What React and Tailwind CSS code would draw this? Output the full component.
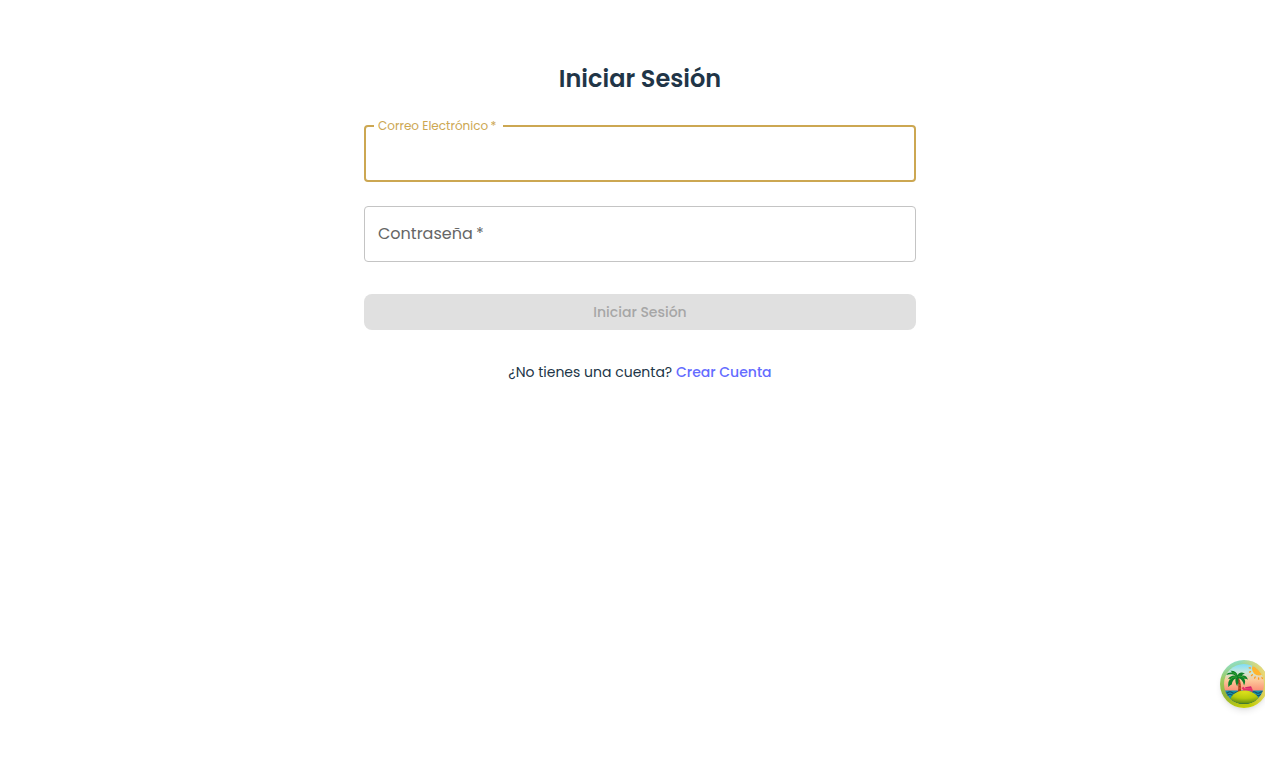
function IslandIcon() {
  return (
    <svg viewBox="0 0 48 48" className="size-12" aria-hidden="true">
      <defs>
        <linearGradient id="ring" x1="0.35" y1="0" x2="0.65" y2="1">
          <stop offset="0" stopColor="#8fe0cf" />
          <stop offset="0.28" stopColor="#9ccb62" />
          <stop offset="0.62" stopColor="#93b536" />
          <stop offset="1" stopColor="#c9d000" />
        </linearGradient>
        <linearGradient id="ringGlow" x1="0" y1="0.5" x2="1" y2="0.25">
          <stop offset="0.5" stopColor="#ffe08a" stopOpacity="0" />
          <stop offset="1" stopColor="#ffdc80" stopOpacity="0.95" />
        </linearGradient>
        <linearGradient id="sky" x1="0" y1="0" x2="0" y2="1">
          <stop offset="0.08" stopColor="#7fdcf8" />
          <stop offset="0.25" stopColor="#c5e9dc" />
          <stop offset="0.42" stopColor="#fdc99a" />
          <stop offset="0.66" stopColor="#fb8a74" />
        </linearGradient>
        <radialGradient id="sand" cx="0.5" cy="0.1" r="0.9">
          <stop offset="0" stopColor="#dde01b" />
          <stop offset="0.55" stopColor="#b8cb0c" />
          <stop offset="1" stopColor="#5c8a12" />
        </radialGradient>
        <clipPath id="scene">
          <circle cx="24" cy="24" r="20" />
        </clipPath>
      </defs>
      <circle cx="24" cy="24" r="24" fill="url(#ring)" />
      <circle cx="24" cy="24" r="24" fill="url(#ringGlow)" />
      <g clipPath="url(#scene)">
        <rect width="48" height="48" fill="url(#sky)" />
        <circle cx="39" cy="8.5" r="7" fill="#ffb52e" />
        <g stroke="#ff9a1c" strokeWidth="1.3" strokeLinecap="round">
          <path d="M30.4 8l-1.2-.1M30.6 11.6l-1.1.5M32.4 14.8l-.9.8M35.2 17l-.6 1.1M38.6 18v1.2M42 17.4l.4 1.1" />
        </g>
        <rect y="30.5" width="48" height="18" fill="#1593ac" />
        <path
          d="M0 32.5q2-1.5 4 0t4 0 4 0 4 0 4 0 4 0 4 0 4 0 4 0 4 0 4 0 4 0M0 35q2-1.5 4 0t4 0 4 0 4 0 4 0 4 0 4 0 4 0 4 0 4 0 4 0 4 0"
          fill="none"
          stroke="#17506b"
          strokeWidth="1.1"
        />
        <path d="M17.6 33c1.4-6 1-11-1.2-15.6l2-.7c2.7 5.3 3 10.4 2.3 16.7z" fill="#a8401f" />
        <path d="M18.5 22l2 .2M19 25l2 .2M18.8 28l2.2.2" stroke="#e56c37" strokeWidth="0.7" />
        <path d="M21.5 28l2.2-1.2 1 1.6 7.6.3.4 1.6-.4 2h-1.1v-1.6l-6-.2-1.4 2h-1.3l.9-2.6z" fill="#e92d68" />
        <path d="M25 27.2l6-.9 1.2 2.4-6.8-.2z" fill="#d4256a" />
        <g transform="translate(-4.4 -3.6) scale(1.2)">
          <path
            d="M18 17c-2-1.8-5.2-1.4-8 2 1.1-.4 1.8-.3 2.2-.1-1.5 1.4-2.1 3.5-1.5 6.8 1-1.4 2.1-2 2.8-2.2.1-2.2 1.3-4.2 3.1-5.1-.4 2 .2 4.4 1.5 6.7.1-1.7.6-2.8 1.1-3.3-.3-1.4-.4-2.6-.1-3.5 2.6.5 3.9 2.8 4.6 6 1.3-2.5 1.1-4.5.1-5.6 1.2-.2 2.1.1 3.1.7-.4-2.6-2.4-3.8-4.9-3.5.5-.8 1.4-1.3 2.4-1.4-3-2-5.1-.8-6 1.2-.7-2.4-2.9-4.1-6.3-3.7.8.3 1.4.8 1.6 1.4-2.4-.2-4.1.5-5 2 3-.8 5.8-.7 8 .8z"
            fill="#0e8027"
          />
          <path d="M17.8 17.3c-2.5-.7-4.7.3-6.1 2.6M19 16.7c2.3-.6 4.2.4 5.6 2M14 13.6c1.6.2 2.8 1 3.6 2.2" fill="none" stroke="#3fae30" strokeWidth="0.7" />
        </g>
        <path d="M4 40h40v8H4z" fill="#2f6a3a" />
        <path d="M10 40c1-5 7-9.5 14.500-9.500S38 35 39.500 40c-4 3-9 3.600-15 3.600S14 43 10 40z" fill="url(#sand)" />
      </g>
    </svg>
  );
}

export default function App() {
  return (
    <div className="min-h-screen bg-white pl-[15px] font-['Poppins','Inter',sans-serif] text-[#213547] antialiased">
      <main className="mx-auto w-full max-w-[600px] px-6 pt-[63px]">
        <h1 className="text-center text-2xl leading-8 font-semibold">Iniciar Sesión</h1>

        <form className="mt-[21px]" onSubmit={(e) => e.preventDefault()}>
          <fieldset className="h-[66px] rounded border-2 border-[#cca752] px-2">
            <legend className="pr-[7px] pl-1 text-xs leading-5 text-[#cca752]">
              <label htmlFor="email">Correo Electrónico{"\u2009"}*</label>
            </legend>
            <input
              id="email"
              type="email"
              required
              className="block h-10 w-full bg-transparent px-1 text-base outline-none"
            />
          </fieldset>

          <div className="relative mt-6 h-14">
            <label
              htmlFor="password"
              className="pointer-events-none absolute inset-y-0 left-3.5 flex items-center text-base text-[#666666]"
            >
              Contraseña{"\u2009"}*
            </label>
            <input
              id="password"
              type="password"
              required
              className="block h-full w-full rounded border border-[#c4c4c4] bg-transparent px-3.5 text-base outline-none"
            />
          </div>

          <button
            type="submit"
            disabled
            className="mt-8 block h-9 w-full rounded-lg bg-[#e0e0e0] text-sm font-medium text-[#a6a6a6]"
          >
            Iniciar Sesión
          </button>
        </form>

        <p className="mt-8 text-center text-sm leading-5">
          ¿No tienes una cuenta?{" "}
          <a href="#crear-cuenta" className="font-medium text-[#646cff]">
            Crear Cuenta
          </a>
        </p>
      </main>

      <button
        type="button"
        aria-label="Open Tanstack query devtools"
        className="fixed -right-[3px] bottom-[76px] rounded-full shadow-md"
      >
        <IslandIcon />
      </button>
    </div>
  );
}
